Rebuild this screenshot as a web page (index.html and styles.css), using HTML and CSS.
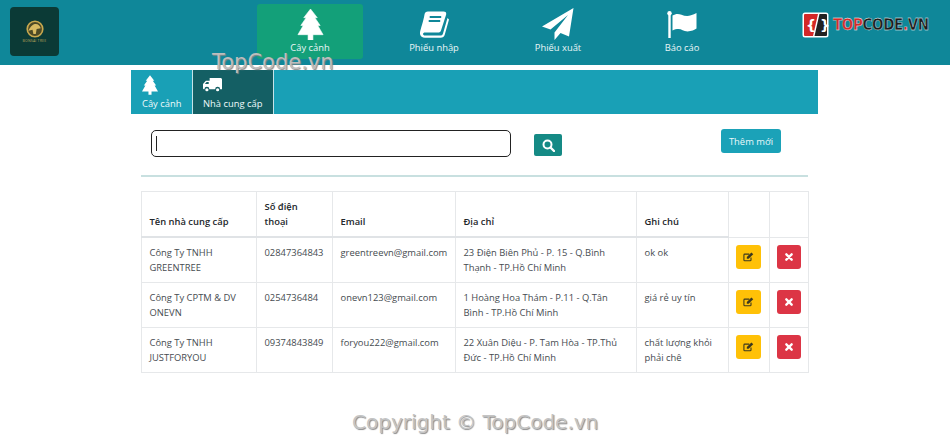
FILE: index.html
```html
<!DOCTYPE html>
<html lang="vi">
<head>
<meta charset="utf-8">
<title>Nhà cung cấp</title>
<link rel="stylesheet" href="styles.css">
</head>
<body>
<header class="topbar">
  <div class="logo">
    <svg width="18" height="18" viewBox="0 0 22 22"><circle cx="11" cy="11" r="9.500" fill="#4d4a26" stroke="#c9a94f" stroke-width="2"/><path d="M3 13c3-6 6-8 9-8s5 2 6 5l-5 1-1 6h-3l-1-5z" fill="#d8bb62"/></svg>
    <span class="logo-text">BONSAI TREE</span>
  </div>
  <nav class="mainnav">
    <a class="navitem active">
      <span class="navicon"><svg width="27" height="31" viewBox="0 0 26 32"><path d="M13 0L20 9H17.500L23 17H20.500L26 26.500H15.500V32H10.500V26.500H0L5.500 17H3L8.500 9H6Z" fill="#fff" stroke="#fff" stroke-width=".6" stroke-linejoin="round"/></svg></span>
      <span>Cây cảnh</span>
    </a>
    <a class="navitem">
      <span class="navicon"><svg width="29" height="27" viewBox="0 0 29 27"><path d="M8 0.500H23.500C26 .5 26.600 2 26 4L21 19.500C20.500 21 19.500 21.500 18 21.500H5C3.800 21.500 3 22.200 3 23S3.800 24.500 5 24.500H20.500C21.800 24.500 22.500 24 23 22.500L27.500 7 29 8.500 24.800 23.500C24.200 25.600 22.800 26.800 20.500 26.800H5C1.800 26.800-.4 24.800 0 21.500 .5 18 3.500 10 4.500 3.500 4.800 1.500 6 .5 8 .5Z" fill="#fff"/><path d="M9.700 6H21.200M8.700 10H20.200" stroke="#0f8799" stroke-width="1.800"/></svg></span>
      <span>Phiếu nhập</span>
    </a>
    <a class="navitem">
      <span class="navicon"><svg width="32" height="32" viewBox="0 0 32 32"><path d="M31.500 0L27 28.500 18.500 25 12.500 32V24.500L26 7 8.500 21.500 0 18.500z" fill="#fff"/></svg></span>
      <span>Phiếu xuất</span>
    </a>
    <a class="navitem">
      <span class="navicon"><svg width="30" height="27" viewBox="0 0 30 27"><circle cx="2.500" cy="2.300" r="2.200" fill="#fff"/><rect x="1.300" y="3" width="2.400" height="24" fill="#fff"/><path d="M5.500 4.500c3-2 6-2 9-.8s6 1.800 9.500.6c2-.6 4-1.300 5.500-2.200v15.500c-2 1.500-5 2.800-9 2.800s-6-2.300-9-2.300c-2 0-4 .4-6 1.400z" fill="#fff"/></svg></span>
      <span>Báo cáo</span>
    </a>
  </nav>
  <div class="brand">
    <svg class="brand-mark" width="27" height="26" viewBox="0 0 27 26">
      <rect x="0.500" y="0.500" width="26" height="25" rx="2.500" fill="#fff"/>
      <path d="M3 2H16L11 24H3a1 1 0 0 1-1-1V3a1 1 0 0 1 1-1Z" fill="#d42727"/>
      <path d="M17.500 2H24a1 1 0 0 1 1 1V23a1 1 0 0 1-1 1H12.500Z" fill="#222"/>
      <text x="4" y="18" class="brand-glyph">{</text>
      <text x="18" y="18" class="brand-glyph">}</text>
    </svg>
    <span class="brand-text"><em>TOP</em>CODE<em>.</em>VN</span>
  </div>
</header>

<main class="page">
  <div class="tabs">
    <a class="tab">
      <svg width="16" height="19" viewBox="0 0 26 32"><path d="M13 0L20 9H17.500L23 17H20.500L26 26.500H15.500V32H10.500V26.500H0L5.500 17H3L8.500 9H6Z" fill="#fff"/></svg>
      <span>Cây cảnh</span>
    </a>
    <a class="tab current">
      <svg width="19" height="15" viewBox="0 0 20 15"><path d="M7 0h11.500c.8 0 1.500.7 1.500 1.500V12h-2a2.600 2.600 0 0 0-5.200 0H6.700a2.600 2.600 0 0 0-5.200 0H1a1 1 0 0 1-1-1V6.500L3 3h4zM2 6.500h4V4.300H3.800z" fill="#fff" fill-rule="evenodd"/><circle cx="4.100" cy="12.500" r="1.700" fill="#fff"/><circle cx="15.400" cy="12.500" r="1.700" fill="#fff"/></svg>
      <span>Nhà cung cấp</span>
    </a>
  </div>

  <div class="content">
    <div class="toolbar">
      <div class="searchbox"><i class="caret"></i></div>
      <button class="searchbtn" type="button">
        <svg width="13" height="13" viewBox="0 0 13 13"><circle cx="5.500" cy="5.500" r="4" fill="none" stroke="#fff" stroke-width="2"/><path d="M8.500 8.500l3.500 3.500" stroke="#fff" stroke-width="2.400" stroke-linecap="round"/></svg>
      </button>
      <button class="addbtn" type="button">Thêm mới</button>
    </div>
    <hr class="divider">
    <table class="grid">
      <colgroup>
        <col class="c1"><col class="c2"><col class="c3"><col class="c4"><col class="c5"><col class="c6"><col class="c7">
      </colgroup>
      <thead>
        <tr><th>Tên nhà cung cấp</th><th>Số điện<br>thoại</th><th>Email</th><th>Địa chỉ</th><th>Ghi chú</th><th class="thin"></th><th class="thin"></th></tr>
      </thead>
      <tbody>
        <tr>
          <td>Công Ty TNHH GREENTREE</td><td>02847364843</td><td>greentreevn@gmail.com</td>
          <td>23 Điện Biên Phủ - P. 15 - Q.Bình Thạnh - TP.Hồ Chí Minh</td><td>ok ok</td>
          <td class="act"><button class="iconbtn edit" type="button"><svg width="11" height="10" viewBox="0 0 13 12"><path d="M9.500 6.500v3c0 .6-.4 1-1 1H2c-.6 0-1-.4-1-1v-6c0-.6.4-1 1-1h5.500" fill="none" stroke="#3b3820" stroke-width="1.300"/><path d="M4.500 6l5.500-5.500 2.200 2.200L6.700 8.200H4.500z" fill="#3b3820"/></svg></button></td>
          <td class="act"><button class="iconbtn del" type="button"><svg width="8" height="8" viewBox="0 0 9 9"><path d="M1.500 1.500l6 6M7.500 1.500l-6 6" stroke="#fff" stroke-width="2.600" stroke-linecap="round"/></svg></button></td>
        </tr>
        <tr>
          <td>Công Ty CPTM &amp; DV ONEVN</td><td>0254736484</td><td>onevn123@gmail.com</td>
          <td>1 Hoàng Hoa Thám - P.11 - Q.Tân Bình - TP.Hồ Chí Minh</td><td>giá rẻ uy tín</td>
          <td class="act"><button class="iconbtn edit" type="button"><svg width="11" height="10" viewBox="0 0 13 12"><path d="M9.500 6.500v3c0 .6-.4 1-1 1H2c-.6 0-1-.4-1-1v-6c0-.6.4-1 1-1h5.500" fill="none" stroke="#3b3820" stroke-width="1.300"/><path d="M4.500 6l5.500-5.500 2.200 2.200L6.700 8.200H4.500z" fill="#3b3820"/></svg></button></td>
          <td class="act"><button class="iconbtn del" type="button"><svg width="8" height="8" viewBox="0 0 9 9"><path d="M1.500 1.500l6 6M7.500 1.500l-6 6" stroke="#fff" stroke-width="2.600" stroke-linecap="round"/></svg></button></td>
        </tr>
        <tr>
          <td>Công Ty TNHH JUSTFORYOU</td><td>09374843849</td><td>foryou222@gmail.com</td>
          <td>22 Xuân Diệu - P. Tam Hòa - TP.Thủ Đức - TP.Hồ Chí Minh</td><td>chất lượng khỏi phải chê</td>
          <td class="act"><button class="iconbtn edit" type="button"><svg width="11" height="10" viewBox="0 0 13 12"><path d="M9.500 6.500v3c0 .6-.4 1-1 1H2c-.6 0-1-.4-1-1v-6c0-.6.4-1 1-1h5.500" fill="none" stroke="#3b3820" stroke-width="1.300"/><path d="M4.500 6l5.500-5.500 2.200 2.200L6.700 8.200H4.500z" fill="#3b3820"/></svg></button></td>
          <td class="act"><button class="iconbtn del" type="button"><svg width="8" height="8" viewBox="0 0 9 9"><path d="M1.500 1.500l6 6M7.500 1.500l-6 6" stroke="#fff" stroke-width="2.600" stroke-linecap="round"/></svg></button></td>
        </tr>
      </tbody>
    </table>
  </div>
</main>

<div class="mark mark-top">TopCode.vn</div>
<div class="mark mark-bottom">Copyright © TopCode.vn</div>
</body>
</html>
```

FILE: styles.css
```css
* { box-sizing: border-box; }
html, body { margin: 0; padding: 0; }
body {
  width: 950px;
  height: 444px;
  overflow: hidden;
  position: relative;
  background: #fff;
  font-family: "Open Sans", "Noto Sans", sans-serif;
  color: #212529;
}

.topbar {
  height: 65px;
  background: #0f8799;
  display: flex;
  align-items: flex-start;
}
.logo {
  width: 49px;
  height: 49px;
  margin: 7px 0 0 10px;
  background: #0b3a36;
  border-radius: 4px;
  display: flex;
  flex-direction: column;
  align-items: center;
  padding-top: 13px;
}
.logo-text {
  font-size: 3.500px;
  line-height: 5px;
  letter-spacing: .2px;
  white-space: nowrap;
  color: #b9a25a;
}
.mainnav {
  display: flex;
  gap: 18px;
  margin: 4px 0 0 198px;
}
.navitem {
  width: 106px;
  height: 55px;
  display: flex;
  flex-direction: column;
  align-items: center;
  padding-top: 4px;
  border-radius: 3px;
  color: #eaf6f7;
  font-size: 9.400px;
  line-height: 14px;
}
.navitem.active { background: #13a079; }
.navicon {
  height: 32px;
  margin-bottom: 1px;
  display: flex;
  align-items: center;
}

.brand {
  display: flex;
  align-items: center;
  margin: 12px 0 0 67px;
  height: 26px;
}
.brand-glyph {
  font-family: "DejaVu Sans", sans-serif;
  font-size: 14px;
  font-weight: 700;
  fill: #fff;
}
.brand-text {
  font-family: "DejaVu Sans Condensed", "DejaVu Sans", sans-serif;
  font-weight: 700;
  font-size: 15px;
  letter-spacing: -.35px;
  margin-left: 4px;
  color: #1d1d1d;
  -webkit-text-stroke: .3px #fff;
}
.brand-text em { font-style: normal; color: #d22a2a; }

.page { width: 687px; margin: 5px 0 0 131px; }
.tabs {
  height: 44px;
  background: #19a0b6;
  display: flex;
}
.tab {
  display: flex;
  flex-direction: column;
  align-items: flex-start;
  width: 62px;
  padding: 5px 0 0 11px;
  border-right: 1px solid #c6e3e8;
  color: #eefafb;
  font-size: 9.400px;
  line-height: 14px;
}
.tab svg { height: 20px; margin-bottom: 2px; }
.tab.current { width: 81px; padding-left: 10px; background: #145f64; }

.content { padding: 0 10px 0 10px; }
.toolbar {
  display: flex;
  align-items: flex-start;
  height: 61px;
  padding-top: 16px;
}
.searchbox {
  width: 360px;
  height: 27px;
  margin-left: 10px;
  border: 1.500px solid #222;
  border-radius: 5px;
  display: flex;
  align-items: center;
  padding-left: 4px;
}
.caret { display: block; width: 1px; height: 15px; background: #222; }
.searchbtn {
  width: 28px;
  height: 22px;
  margin: 4px 0 0 23px;
  padding: 0;
  border: 0;
  border-radius: 2px;
  background: #158a85;
  display: flex;
  align-items: center;
  justify-content: center;
}
.addbtn {
  width: 60px;
  height: 24px;
  margin: -1px 0 0 159px;
  padding: 0;
  border: 0;
  border-radius: 3px;
  background: #1ba2b8;
  color: #eaf8fa;
  font-family: inherit;
  font-size: 9.400px;
}
.divider {
  margin: 0;
  border: 0;
  height: 2px;
  background: #c8e0e0;
}

.grid {
  margin-top: 14px;
  width: 667px;
  border-collapse: collapse;
  table-layout: fixed;
  font-size: 9.400px;
  line-height: 15px;
  color: #464b50;
}
.c1 { width: 115px; }
.c2 { width: 76px; }
.c3 { width: 123px; }
.c4 { width: 181px; }
.c5 { width: 92px; }
.c6 { width: 41px; }
.c7 { width: 39px; }
.grid th, .grid td {
  border: 1px solid #e6e8ea;
  padding: 7px 7.500px;
  vertical-align: top;
  text-align: left;
}
.grid th {
  height: 45px;
  vertical-align: bottom;
  font-weight: 600;
  color: #23272b;
  border-bottom: 2px solid #e0e3e6;
}
.grid th.thin { border-bottom: 1px solid #e6e8ea; }
.grid td { height: 45px; }
.grid td.act { padding: 7px 0 0 7px; }
.iconbtn {
  width: 25px;
  height: 24px;
  padding: 0;
  border: 0;
  border-radius: 3px;
  display: flex;
  align-items: center;
  justify-content: center;
}
.edit { background: #ffc107; }
.del { background: #dc3545; width: 24px; }

.mark {
  position: absolute;
  font-family: "DejaVu Sans", sans-serif;
  line-height: 22px;
  white-space: nowrap;
  color: #c4c4c4;
  text-shadow: 1px 1px 1px #8a8a8a;
}
.mark-top {
  left: 212px;
  top: 51px;
  font-size: 21px;
  color: #bdbdbd;
}
.mark-bottom {
  left: 352px;
  top: 411px;
  font-size: 20px;
}
```
